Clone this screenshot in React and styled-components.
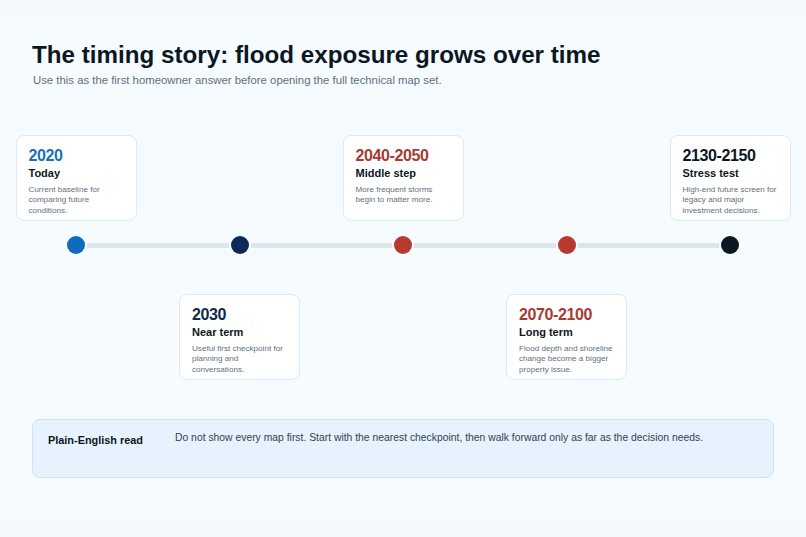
import React from "react";
import styled, { createGlobalStyle } from "styled-components";

const GlobalStyle = createGlobalStyle`
  html, body {
    margin: 0;
    padding: 0;
    background: #f4f8fb;
    font-family: "Liberation Sans", Arial, sans-serif;
  }
`;

const Page = styled.div`
  width: 806px;
  height: 537px;
  padding: 16px 0 17px;
  box-sizing: border-box;
  overflow: hidden;
`;

const Slide = styled.section`
  height: 504px;
  background: #f6fbff;
  box-sizing: border-box;
  padding-top: 24px;
`;

const Header = styled.header`
  padding: 0 32px;
`;

const Title = styled.h1`
  margin: 0;
  font-size: 24.2px;
  line-height: 30px;
  font-weight: 700;
  color: #0b1722;
`;

const Subtitle = styled.p`
  margin: 2px 0 0 1px;
  font-size: 11.35px;
  line-height: 16px;
  color: #5f6f7d;
`;

const Timeline = styled.div`
  margin: 47px 15px 0 15.5px;
  display: grid;
  grid-template-columns: repeat(5, 121px);
  grid-template-rows: 86px 48px 25px 86px;
  column-gap: 42.5px;
`;

const Track = styled.div`
  grid-row: 2;
  grid-column: 1 / -1;
  display: grid;
  grid-template-columns: repeat(5, 121px);
  column-gap: 42.5px;
  align-items: center;
  justify-items: center;
  position: relative;

  &::before {
    content: "";
    position: absolute;
    left: 60px;
    right: 60px;
    top: 21.5px;
    height: 5px;
    background: #dde6ef;
  }
`;

const Dot = styled.span`
  position: relative;
  width: 18px;
  height: 18px;
  border-radius: 50%;
  background: ${(p) => p.$color};
  box-shadow: 0 0 0 2px #f6fbff;
`;

const Card = styled.article`
  grid-column: ${(p) => p.$col};
  grid-row: ${(p) => (p.$below ? 4 : 1)};
  background: #fff;
  border: 1px solid #dfe9f0;
  border-radius: 8px;
  box-sizing: border-box;
  padding: 11px 12px 0;
  overflow: hidden;
`;

const Year = styled.div`
  font-size: 16px;
  letter-spacing: -0.4px;
  line-height: 18px;
  font-weight: 700;
  color: ${(p) => p.$color};
`;

const Name = styled.div`
  margin-top: 2px;
  font-size: 11px;
  line-height: 13px;
  font-weight: 700;
  color: #0b1722;
`;

const Desc = styled.p`
  margin: 5px 0 0;
  font-size: 8.1px;
  line-height: 10.4px;
  color: #5f6f7d;
`;

const Note = styled.aside`
  margin: 39px 32px 0;
  height: 59px;
  box-sizing: border-box;
  padding: 12px 15px;
  display: grid;
  grid-template-columns: 127px 1fr;
  background: #e6f2fd;
  border: 1px solid #d3e0ea;
  border-radius: 8px;
`;

const NoteLabel = styled.strong`
  font-size: 10.9px;
  line-height: 15px;
  margin-top: 1px;
  color: #0b1722;
`;

const NoteText = styled.span`
  font-size: 10.37px;
  line-height: 12px;
  color: #33424f;
`;

const steps = [
  { year: "2020", name: "Today", text: "Current baseline for comparing future conditions.", color: "#1a6fb5", dot: "#0f6cbd" },
  { year: "2030", name: "Near term", text: "Useful first checkpoint for planning and conversations.", color: "#12294b", dot: "#0b2a55", below: true },
  { year: "2040-2050", name: "Middle step", text: "More frequent storms begin to matter more.", color: "#a83a32", dot: "#b83a2f" },
  { year: "2070-2100", name: "Long term", text: "Flood depth and shoreline change become a bigger property issue.", color: "#a83a32", dot: "#b83a2f", below: true },
  { year: "2130-2150", name: "Stress test", text: "High-end future screen for legacy and major investment decisions.", color: "#0b1722", dot: "#0b1722" },
];

export default function App() {
  return (
    <Page>
      <GlobalStyle />
      <Slide>
        <Header>
          <Title>The timing story: flood exposure grows over time</Title>
          <Subtitle>Use this as the first homeowner answer before opening the full technical map set.</Subtitle>
        </Header>
        <Timeline>
          {steps.map((s, i) => (
            <Card key={s.year} $col={i + 1} $below={s.below}>
              <Year $color={s.color}>{s.year}</Year>
              <Name>{s.name}</Name>
              <Desc>{s.text}</Desc>
            </Card>
          ))}
          <Track>
            {steps.map((s) => (
              <Dot key={s.year} $color={s.dot} />
            ))}
          </Track>
        </Timeline>
        <Note>
          <NoteLabel>Plain-English read</NoteLabel>
          <NoteText>Do not show every map first. Start with the nearest checkpoint, then walk forward only as far as the decision needs.</NoteText>
        </Note>
      </Slide>
    </Page>
  );
}
